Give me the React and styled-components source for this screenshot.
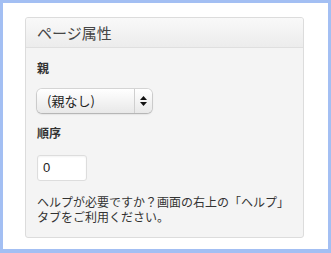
import React from 'react';
import styled, { createGlobalStyle } from 'styled-components';

const GlobalStyle = createGlobalStyle`
  html, body {
    margin: 0;
    padding: 0;
    background: #ffffff;
  }
  * {
    box-sizing: border-box;
  }
`;

const Frame = styled.div`
  width: 331px;
  height: 253px;
  border: 3px solid #a3bff3;
  border-bottom-width: 4px;
  background: #ffffff;
  padding: 14px 24px 0 22px;
  font-family: "Noto Sans CJK JP", "Liberation Sans", sans-serif;
`;

const Panel = styled.div`
  width: 279px;
  height: 221px;
  border: 1px solid #dcdcdc;
  border-radius: 3px;
  background: #f4f4f4;
  overflow: hidden;
`;

const PanelHeader = styled.div`
  height: 30px;
  border-bottom: 1px solid #dfdfdf;
  background: linear-gradient(to bottom, #f9f9f9, #ececec);
  padding-left: 11px;
`;

const Title = styled.h3`
  margin: 0;
  font-size: 15px;
  line-height: 29px;
  font-weight: normal;
  color: #464646;
`;

const PanelBody = styled.div`
  padding: 12px 11px 0 11px;
  display: flex;
  flex-direction: column;
  align-items: flex-start;
`;

const Label = styled.p`
  margin: ${(p) => p.$top || 0}px 0 0 0;
  font-size: 12px;
  line-height: 16px;
  font-weight: bold;
  color: #333;
`;

const SelectBox = styled.div`
  margin-top: 13px;
  width: 115px;
  height: 24px;
  display: flex;
  border-radius: 5px;
  background: linear-gradient(to bottom, #ffffff, #e8e8e8);
  box-shadow: 0 0 0 1px rgba(0, 0, 0, 0.12), 0 1px 2px rgba(0, 0, 0, 0.2);
`;

const SelectValue = styled.span`
  flex: 1;
  padding-left: 10px;
  font-size: 13px;
  line-height: 24px;
  color: #222;
  border-right: 1px solid #cfcfcf;
`;

const SelectArrows = styled.span`
  width: 17px;
  display: flex;
  align-items: center;
  justify-content: center;
`;

const NumberInput = styled.div`
  margin-top: 14px;
  width: 50px;
  height: 26px;
  border: 1px solid #dddddd;
  border-radius: 3px;
  background: #ffffff;
  box-shadow: inset 0 1px 2px rgba(0, 0, 0, 0.05);
  padding-left: 5px;
  font-family: "Liberation Sans", sans-serif;
  font-size: 13px;
  line-height: 24px;
  color: #222;
`;

const Help = styled.p`
  margin: 13px 0 0 0;
  width: 257px;
  font-size: 12px;
  line-height: 15px;
  color: #333;
`;

const Arrows = () => (
  <svg width="7" height="10" viewBox="0 0 7 10">
    <polygon points="3.5,0 7,4 0,4" fill="#111" />
    <polygon points="0,6 7,6 3.5,10" fill="#111" />
  </svg>
);

export default function App() {
  return (
    <>
      <GlobalStyle />
      <Frame>
        <Panel>
          <PanelHeader>
            <Title>ページ属性</Title>
          </PanelHeader>
          <PanelBody>
            <Label>親</Label>
            <SelectBox>
              <SelectValue>(親なし)</SelectValue>
              <SelectArrows>
                <Arrows />
              </SelectArrows>
            </SelectBox>
            <Label $top={12}>順序</Label>
            <NumberInput>0</NumberInput>
            <Help>ヘルプが必要ですか？画面の右上の「ヘルプ」タブをご利用ください。</Help>
          </PanelBody>
        </Panel>
      </Frame>
    </>
  );
}
